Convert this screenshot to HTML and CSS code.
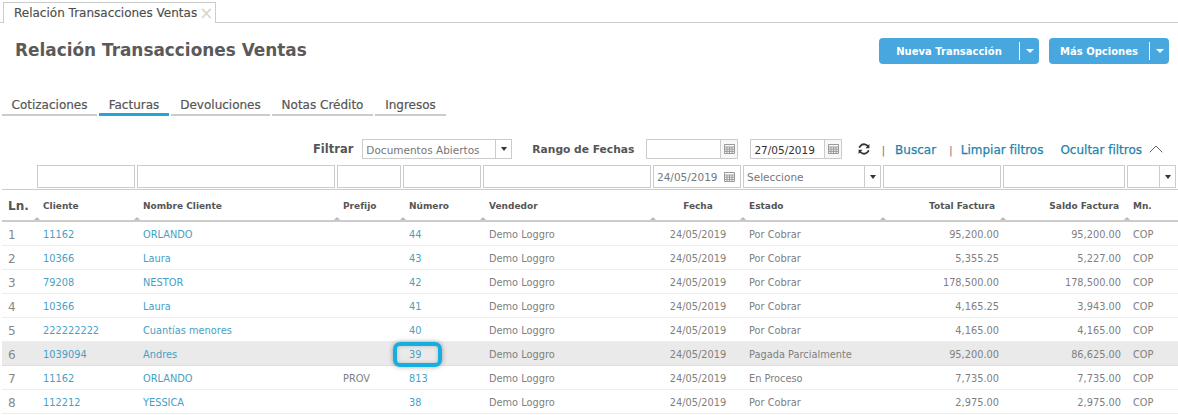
FILE: index.html
```html
<!DOCTYPE html>
<html lang="es">
<head>
<meta charset="utf-8">
<title>Relación Transacciones Ventas</title>
<link rel="stylesheet" href="styles.css">
</head>
<body>
<svg class="defs" width="0" height="0" aria-hidden="true">
  <symbol id="cal" viewBox="0 0 11 10"><path d="M.5.5h10v9H.5zM.5 3h10M.5 5.2h10M.5 7.4h10M3 3v6.5M5.5 3v6.5M8 3v6.5" fill="none" stroke="#999" stroke-width="1"/></symbol>
</svg>
<div class="tabbar"><div class="doc-tab"><span>Relación Transacciones Ventas</span><span class="close">×</span></div></div>
<header class="head">
  <h1>Relación Transacciones Ventas</h1>
  <div class="actions">
    <div class="btn btn-a"><span class="btn-label">Nueva Transacción</span><span class="btn-caret"></span></div>
    <div class="btn btn-b"><span class="btn-label">Más Opciones</span><span class="btn-caret"></span></div>
  </div>
</header>
<nav class="tabs">
  <a class="t t1">Cotizaciones</a><a class="t t2 on">Facturas</a><a class="t t3">Devoluciones</a><a class="t t4">Notas Crédito</a><a class="t t5">Ingresos</a>
</nav>
<div class="filterbar">
  <b class="flabel">Filtrar</b>
  <div class="box sel sel-doc"><span>Documentos Abiertos</span><i class="drop"></i></div>
  <b class="flabel range">Rango de Fechas</b>
  <div class="box date d1"><span></span><i class="calbtn"><svg width="11" height="10"><use href="#cal"/></svg></i></div>
  <div class="box date d2"><span class="dark">27/05/2019</span><i class="calbtn"><svg width="11" height="10"><use href="#cal"/></svg></i></div>
  <svg class="refresh" width="12" height="12" viewBox="0 0 12 12"><path d="M10.4 4.6A4.6 4.6 0 0 0 2.4 3L1.2 4.6M1.6 7.4A4.6 4.6 0 0 0 9.6 9l1.2-1.6" fill="none" stroke="#333" stroke-width="1.8"/><path d="M11.4 1v4.2H7.4zM.6 11V6.8h4z" fill="#333"/></svg>
  <span class="sep s1">|</span><a class="act buscar">Buscar</a><span class="sep s2">|</span><a class="act limpiar">Limpiar filtros</a><a class="act ocultar">Ocultar filtros</a>
  <svg class="chev" width="14" height="8" viewBox="0 0 14 8"><path d="M.7 7.3 7 1l6.3 6.3" fill="none" stroke="#666" stroke-width="1"/></svg>
</div>
<div class="grid">
  <div class="row filters">
    <div></div><div class="box"></div><div class="box"></div><div class="box"></div><div class="box"></div><div class="box"></div>
    <div class="box date"><span>24/05/2019</span><i class="cal-plain"><svg width="11" height="10"><use href="#cal"/></svg></i></div>
    <div class="box sel"><span>Seleccione</span><i class="drop"></i></div>
    <div class="box"></div><div class="box"></div>
    <div class="box sel"><span></span><i class="drop"></i></div>
  </div>
  <div class="row th">
    <div class="ln">Ln.</div><div class="s">Cliente</div><div class="s">Nombre Cliente</div><div class="s">Prefijo</div><div class="s">Número</div><div class="s">Vendedor</div><div class="c s">Fecha</div><div class="s">Estado</div><div class="r s">Total Factura</div><div class="r s">Saldo Factura</div><div class="s">Mn.</div>
  </div>
  <div class="row td"><div class="ln">1</div><a>11162</a><a>ORLANDO</a><div></div><a>44</a><div>Demo Loggro</div><div class="c">24/05/2019</div><div>Por Cobrar</div><div class="r">95,200.00</div><div class="r">95,200.00</div><div>COP</div></div>
  <div class="row td"><div class="ln">2</div><a>10366</a><a>Laura</a><div></div><a>43</a><div>Demo Loggro</div><div class="c">24/05/2019</div><div>Por Cobrar</div><div class="r">5,355.25</div><div class="r">5,227.00</div><div>COP</div></div>
  <div class="row td"><div class="ln">3</div><a>79208</a><a>NESTOR</a><div></div><a>42</a><div>Demo Loggro</div><div class="c">24/05/2019</div><div>Por Cobrar</div><div class="r">178,500.00</div><div class="r">178,500.00</div><div>COP</div></div>
  <div class="row td"><div class="ln">4</div><a>10366</a><a>Laura</a><div></div><a>41</a><div>Demo Loggro</div><div class="c">24/05/2019</div><div>Por Cobrar</div><div class="r">4,165.25</div><div class="r">3,943.00</div><div>COP</div></div>
  <div class="row td"><div class="ln">5</div><a>222222222</a><a>Cuantías menores</a><div></div><a>40</a><div>Demo Loggro</div><div class="c">24/05/2019</div><div>Por Cobrar</div><div class="r">4,165.00</div><div class="r">4,165.00</div><div>COP</div></div>
  <div class="row td sel-row"><div class="ln">6</div><a>1039094</a><a>Andres</a><div></div><a class="mark">39</a><div>Demo Loggro</div><div class="c">24/05/2019</div><div>Pagada Parcialmente</div><div class="r">95,200.00</div><div class="r">86,625.00</div><div>COP</div></div>
  <div class="row td"><div class="ln">7</div><a>11162</a><a>ORLANDO</a><div>PROV</div><a>813</a><div>Demo Loggro</div><div class="c">24/05/2019</div><div>En Proceso</div><div class="r">7,735.00</div><div class="r">7,735.00</div><div>COP</div></div>
  <div class="row td"><div class="ln">8</div><a>112212</a><a>YESSICA</a><div></div><a>38</a><div>Demo Loggro</div><div class="c">24/05/2019</div><div>Por Cobrar</div><div class="r">2,975.00</div><div class="r">2,975.00</div><div>COP</div></div>
</div>
</body>
</html>
```
FILE: styles.css
```css
* { box-sizing: border-box; }
html, body { margin: 0; height: 415px; overflow: hidden; background: #fff; }
body { font-family: "DejaVu Sans", sans-serif; font-size: 10px; color: #777; }
.defs { position: absolute; }

.tabbar { height: 23px; padding: 2px 0 0 3px; border-bottom: 1px solid #ccc; }
.doc-tab { width: 213px; height: 21px; border: 1px solid #ccc; border-bottom: 0; background: #fff; padding: 0 0 0 10px; display: flex; align-items: center; gap: 2px; font-size: 12px; color: #4d4d4d; white-space: nowrap; -webkit-text-stroke: .15px #4d4d4d; }
.close { color: #d4d4d4; font-size: 17px; line-height: 14px; -webkit-text-stroke: 0; }

.head { display: flex; justify-content: space-between; height: 51px; padding: 15px 9px 0 15px; }
h1 { margin: 0; font-size: 16.9px; line-height: 24px; font-weight: 700; color: #5a5a5a; white-space: nowrap; }
.actions { display: flex; gap: 10px; }
.btn { height: 26px; background: #47a7de; border-radius: 4px; display: flex; align-items: center; color: #fff; font-weight: 700; font-size: 10px; white-space: nowrap; }
.btn-a { width: 160px; }
.btn-b { width: 120px; }
.btn-label { flex: 1; text-align: center; height: 18px; line-height: 20px; border-right: 1px solid #fff; }
.btn-caret { width: 19px; display: flex; justify-content: center; }
.btn-caret::before { content: ""; border: 4px solid transparent; border-top: 4px solid #fff; border-bottom: 0; }

.tabs { display: flex; height: 29px; margin: 13px 0 0 2px; color: #555; font-size: 12px; }
.t { height: 29px; padding-top: 6px; line-height: 24px; border-bottom: 2px solid #ccc; text-align: center; color: #555; white-space: nowrap; -webkit-text-stroke: .2px #555; margin-right: 2px; }
.t1 { width: 95px; }
.t2 { width: 70px; border-bottom: 3px solid #22a8d6; }
.t3 { width: 99px; }
.t4 { width: 101px; }
.t5 { width: 71px; }

.filterbar { display: flex; align-items: center; height: 22px; margin-top: 22px; padding-left: 313px; white-space: nowrap; }
.flabel { font-size: 11.5px; color: #555; }
.range { margin-left: 20px; font-size: 10.7px; }
.box { height: 23px; border: 1px solid #ccc; background: #fff; display: flex; align-items: center; font-size: 10.5px; color: #777; padding-left: 3px; min-width: 0; overflow: hidden; white-space: nowrap; }
.filterbar .box { height: 20px; }
.box span { flex: 1; padding-top: 1px; }
.sel-doc { width: 150px; margin-left: 9px; }
.d1 { width: 92px; margin-left: 12px; }
.d2 { width: 92px; margin-left: 12px; }
.dark { color: #333; }
.drop { width: 16px; height: 100%; border-left: 1px solid #ccc; display: flex; align-items: center; justify-content: center; flex: none; }
.drop::before { content: ""; border: 3px solid transparent; border-top: 4px solid #333; border-bottom: 0; }
.calbtn { width: 17px; height: 100%; border-left: 1px solid #ccc; display: flex; align-items: center; justify-content: center; flex: none; background: #f7f7f7; }
.cal-plain { width: 16px; display: flex; align-items: center; flex: none; }
.refresh { margin-left: 16px; flex: none; }
.sep { color: #777; font-size: 11px; padding-top: 2px; }
.s1 { margin-left: 11px; }
.s2 { margin-left: 13px; }
.act { font-size: 12px; color: #1d84ad; -webkit-text-stroke: .25px #1d84ad; padding-top: 2px; }
.buscar { margin-left: 10px; }
.limpiar { margin-left: 8px; }
.ocultar { margin-left: 17px; }
.chev { margin-left: 7px; flex: none; }

.grid { margin: 5px 0 0 2px; width: 1176px; }
.row { display: grid; grid-template-columns: 35px 100px 200px 66px 80px 170px 90px 140px 120px 124px 51px; }
.filters { height: 25px; border-bottom: 1px solid #ccc; }
.filters > .box { margin-right: 2px; }
.th { height: 32px; border-bottom: 2px solid #ccc; align-items: center; color: #555; font-weight: 700; font-size: 9px; padding-top: 2px; }
.th > div { position: relative; height: 100%; display: flex; align-items: center; padding-left: 6px; }
.th > div.c { justify-content: center; padding: 0; }
.th > div.r { justify-content: flex-end; padding: 0 8px 0 0; }
.th > .s::after { content: ""; position: absolute; left: -3px; bottom: 0; border: 3px solid transparent; border-top: 0; border-bottom: 3px solid #bbb; }
.th > .ln { font-size: 12px; }
.td { height: 24px; padding-top: 1px; border-bottom: 1px solid #eee; align-items: center; font-size: 9.8px; color: #808080; }
.td > * { padding-left: 6px; white-space: nowrap; }
.td > .c { text-align: center; padding: 0; }
.td > .r { text-align: right; padding: 0 6px 0 0; }
.td > .r:nth-child(9) { padding-right: 4px; }
.td a { color: #469fc6; }
.td .ln { font-size: 12px; color: #888; padding-top: 2px; }
.sel-row { background: #eaeaea; border-bottom-color: #ddd; }
.mark { position: relative; }
.mark::after { content: ""; box-sizing: border-box; position: absolute; left: -10px; top: -7px; width: 49px; height: 25px; border: 4px solid #14aee0; border-radius: 7px; box-shadow: 0 0 5px rgba(0,0,0,.35), inset 0 0 4px rgba(0,0,0,.2); }
```
